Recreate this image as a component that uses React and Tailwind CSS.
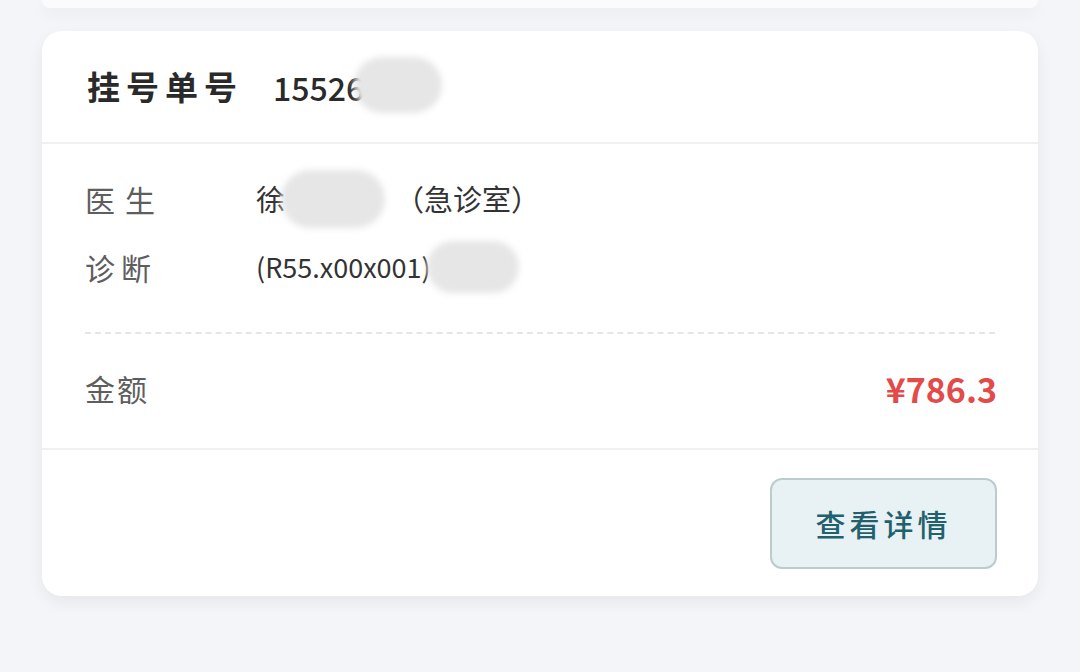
import React from "react";

const font = { fontFamily: '"Noto Sans CJK SC", "Noto Sans", sans-serif' };

function Blur({ className }) {
  return (
    <span
      className={`inline-block rounded-full bg-[#e6e6e6] blur-[3px] align-middle ${className}`}
    />
  );
}

export default function App() {
  return (
    <div className="w-[1080px] h-[672px] bg-[#f4f5f9] overflow-hidden" style={font}>
      {/* previous card tail */}
      <div className="mx-[42px] h-[8px] rounded-b-[20px] bg-[#fbfbfc] shadow-[0_6px_14px_rgba(0,0,0,0.05)]" />

      <div className="mx-[42px] mt-[23px] bg-white rounded-[20px] shadow-[0_6px_16px_rgba(0,0,0,0.06)] overflow-hidden">
        {/* Header */}
        <div className="h-[113px] flex items-center px-[45px] border-b-2 border-[#f0f0f2]">
          <span className="text-[33px] font-bold text-[#2a2a2a] tracking-[6px]">挂号单号</span>
          <span className="ml-[30px] text-[32px] font-medium text-[#2a2a2a]">15526</span>
          <Blur className="w-[88px] h-[56px] -ml-[10px] -mt-[4px]" />
        </div>

        {/* Info */}
        <div className="px-[43px] pt-[28px]">
          <div className="flex items-center h-[54px]">
            <span className="w-[171px] text-[30px] text-[#5e5e5e] tracking-[10px]">医生</span>
            <span className="text-[29px] text-[#333]">徐</span>
            <Blur className="w-[104px] h-[58px] -ml-[4px]" />
            <span className="text-[29px] text-[#333] ml-[10px]">（急诊室）</span>
          </div>
          <div className="flex items-center h-[54px] mt-[14px]">
            <span className="w-[171px] text-[30px] text-[#5e5e5e] tracking-[6px]">诊断</span>
            <span className="text-[27px] text-[#333]">(R55.x00x001)</span>
            <Blur className="w-[92px] h-[52px] -ml-[4px]" />
          </div>

          <div className="mt-[38px] border-t-2 border-dashed border-[#e6e6e9]" />

          <div className="flex items-center justify-between h-[114px] pb-[6px]">
            <span className="text-[30px] text-[#5e5e5e] tracking-[2px]">金额</span>
            <span className="text-[34px] font-bold text-[#e34a4a] mr-[-2px]">¥786.3</span>
          </div>
        </div>

        {/* Footer */}
        <div className="border-t-2 border-[#f0f0f2] h-[148px] flex items-start justify-end pt-[28px] pr-[41px]">
          <button className="w-[227px] h-[91px] rounded-[12px] bg-[#e8f2f4] border-2 border-[#bccbce] text-[30px] text-[#23606d] tracking-[4px] font-medium">
            查看详情
          </button>
        </div>
      </div>
    </div>
  );
}
